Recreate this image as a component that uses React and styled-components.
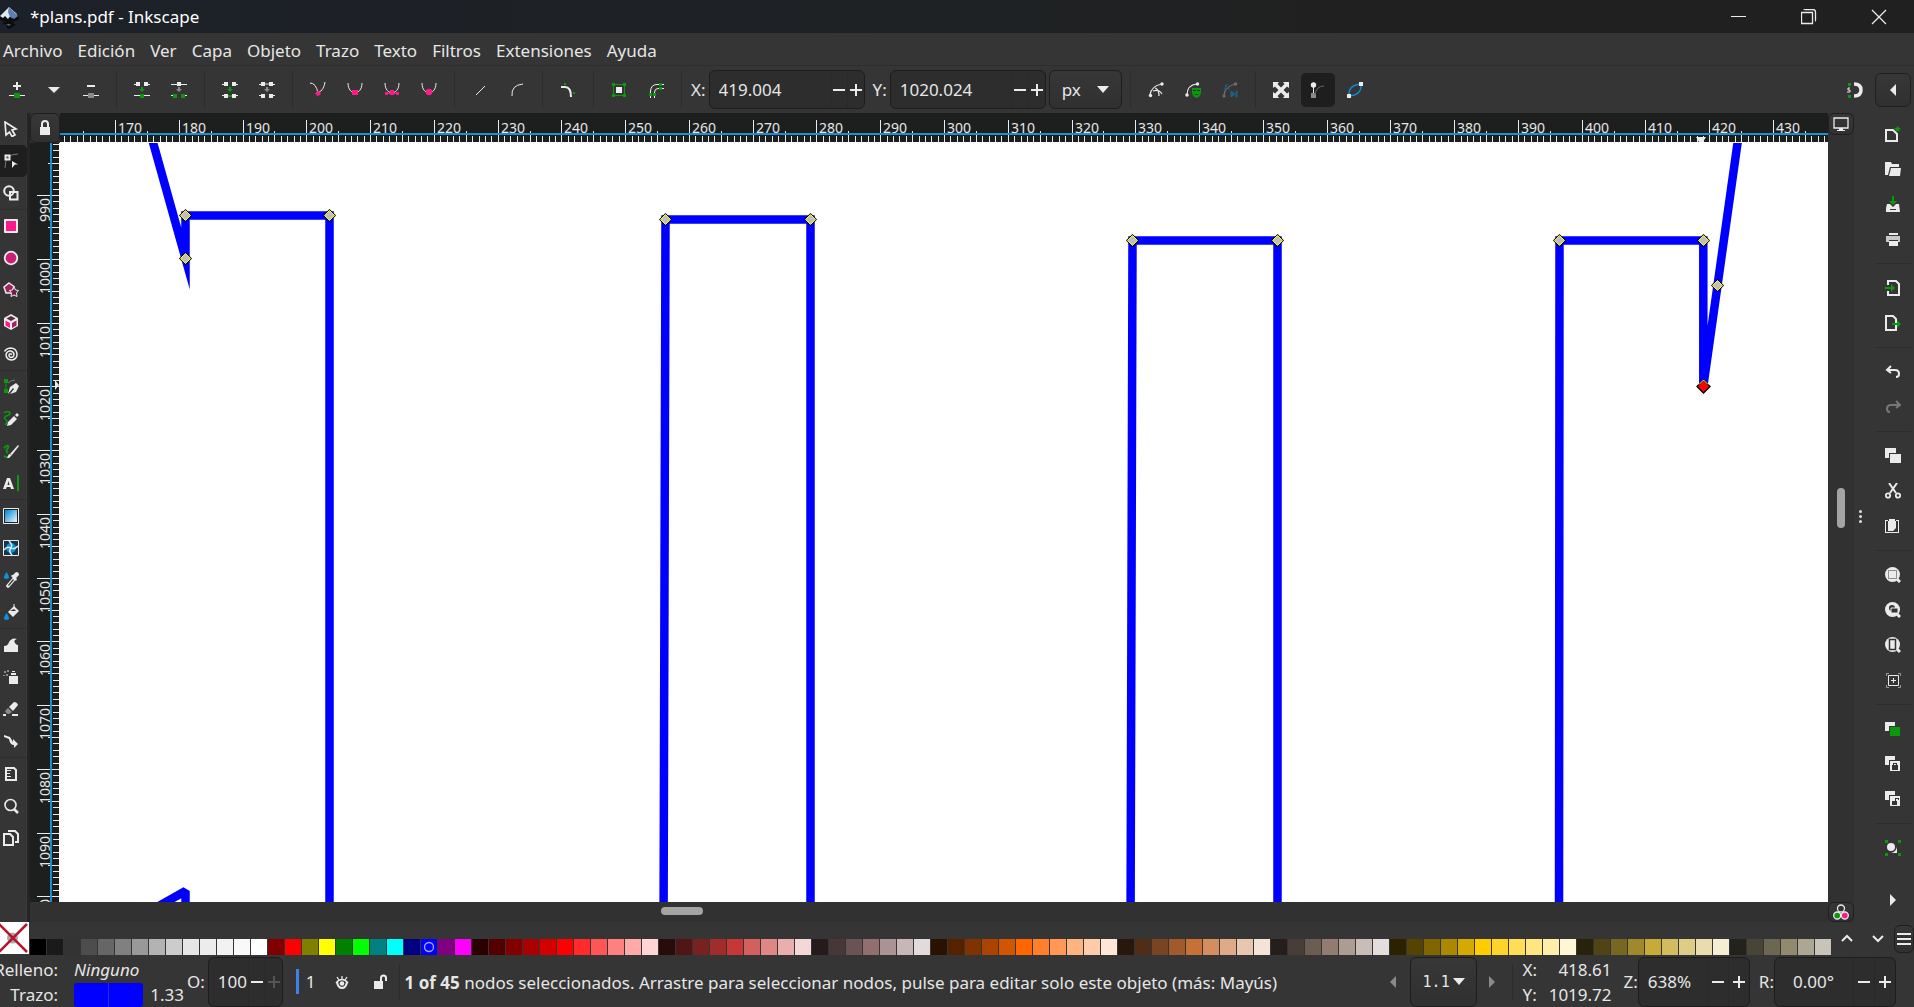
import React from 'react';
import styled, { createGlobalStyle } from 'styled-components';

const FG = '#ebebeb';
const DIM = '#8a8a8a';
const GREEN = '#0a980c';
const PINK = '#ff1a8c';
const BLUE = '#0a93e0';
const UNIT = 6.377;

const GlobalStyle = createGlobalStyle`
    * {
        box-sizing: border-box;
    }
    body {
        margin: 0;
        overflow: hidden;
        background: #353535;
        color: #e6e6e6;
        font-family: "Noto Sans", "Open Sans", sans-serif;
        font-size: 17px;
        line-height: 24px;
    }
    button, input, select {
        margin: 0;
        padding: 0;
        border: 0;
        background: none;
        color: inherit;
        font: inherit;
        outline: none;
    }
    svg {
        display: block;
        flex: none;
    }
`

const Window = styled.div`
    display: flex;
    flex-direction: column;
    height: 100vh;
    overflow: hidden;
`

const TitleBar = styled.header`
    display: flex;
    align-items: center;
    height: 33px;
    background: linear-gradient(90deg, #1c2028, #1e2225 45%, #202020 70%);
    color: #fff;
    font-size: 17px;
`

const Title = styled.h1`
    flex: 1;
    margin: 0 0 0 10px;
    font-size: inherit;
    font-weight: 400;
`

const WindowButton = styled.button`
    display: flex;
    align-items: center;
    justify-content: center;
    width: 70px;
    height: 33px;
`

const MenuBar = styled.nav`
    display: flex;
    align-items: center;
    gap: 15px;
    height: 32px;
    padding: 3px 0 0 3px;

    a {
        color: inherit;
        text-decoration: none;
    }
`

const Toolbar = styled.div`
    display: flex;
    align-items: center;
    gap: 3px;
    height: 48px;
    padding-right: 3px;
    border-top: 1px solid #2e2e2e;
`

const ToolButton = styled.button`
    display: flex;
    align-items: center;
    justify-content: center;
    width: ${props => props.$width || '34px'};
    height: 34px;
    border-radius: 5px;
    background: ${props => props.$active ? '#1e1e1e' : 'none'};
`

const RaisedButton = styled.button`
    display: flex;
    align-items: center;
    justify-content: center;
    width: ${props => props.$width || '100%'};
    height: ${props => props.$height || '100%'};
    border: 1px solid #1f1f1f;
    border-radius: 6px;
    background: linear-gradient(#373737, #303030);
`

const Divider = styled.div`
    width: 11px;
    height: 38px;
    background: linear-gradient(#2d2d2d, #2d2d2d) center / 1px 100% no-repeat;
`

const Spacer = styled.div`
    flex: 1;
`

const Field = styled.label`
    display: flex;
    align-items: center;
    gap: ${props => props.$gap || '3px'};
    margin-left: ${props => props.$space || '0'};
`

const Spin = styled.span`
    display: flex;
    align-items: center;
    width: ${props => props.$width};
    height: ${props => props.$height};
    border: 1px solid #1d1d1d;
    border-radius: 6px;
    background: #2d2d2d;

    input {
        flex: 1;
        min-width: 0;
        height: 100%;
        padding-left: ${props => props.$pad || '9px'};
    }
    button {
        display: flex;
        align-items: center;
        justify-content: center;
        width: ${props => props.$step || '17px'};
        height: 100%;
        border-left: 1px solid #292929;
    }
`

const SelectBox = styled.span`
    position: relative;
    width: ${props => props.$width};
    height: ${props => props.$height};
    border: 1px solid #1d1d1d;
    border-radius: 6px;
    background: linear-gradient(#373737, #303030);

    select {
        width: 100%;
        height: 100%;
        padding-left: 12px;
        appearance: none;
        ${props => props.$mono && 'font: 15px "DejaVu Sans Mono", monospace;'}
    }
    svg {
        position: absolute;
        top: 50%;
        right: ${props => props.$arrow};
        margin-top: -4px;
        pointer-events: none;
    }
`

const Main = styled.div`
    display: flex;
    flex: 1;
    min-height: 0;
`

const Toolbox = styled.aside`
    width: 30px;
    border-right: 3px solid #242424;
    box-shadow: inset -1px 0 #3b3b3b;
`

const Tool = styled.button`
    display: flex;
    align-items: center;
    justify-content: center;
    width: 27px;
    height: 32px;
    padding-right: 5px;
    border-radius: 0 5px 5px 0;
    background: ${props => props.$active ? '#1e1e1e' : 'none'};
`

const ToolLine = styled.div`
    height: 1px;
    background: #2e2e2e;
`

const Work = styled.main`
    display: grid;
    flex: 1;
    grid-template-columns: 30px minmax(0, 1fr) 26px;
    grid-template-rows: 30px minmax(0, 1fr) 20px;
    min-width: 0;
    background: #313131;
`

const Drawing = styled.svg`
    width: 100%;
    height: 100%;
    overflow: hidden;
    background: ${props => props.$paper ? '#fff' : '#1d1f1f'};

    text {
        fill: #e6e6e6;
        font-size: 14px;
    }
`

const Track = styled.div`
    display: flex;
    justify-content: center;
    padding: ${props => props.$pad};
`

const Thumb = styled.div`
    width: ${props => props.$width};
    height: ${props => props.$height};
    border-radius: 5px;
    background: #a4a4a2;
`

const BottomTrack = styled.div`
    display: flex;
    grid-column: 1 / 3;
    padding: 5px 0 0 631px;
`

const Handle = styled.div`
    display: flex;
    flex-direction: column;
    align-items: center;
    gap: 2px;
    width: 13px;
    padding-top: 397px;

    i {
        width: 3px;
        height: 3px;
        border-radius: 2px;
        background: #dedede;
    }
`

const CommandBar = styled.aside`
    display: flex;
    flex-direction: column;
    align-items: center;
    width: 47px;
    padding: 3px 3px 5px 8px;
`

const Command = styled.button`
    display: flex;
    align-items: center;
    justify-content: center;
    width: 36px;
    height: 35px;
`

const CommandLine = styled.div`
    width: 36px;
    height: 14px;
    background: linear-gradient(#2d2d2d, #2d2d2d) center / 100% 1px no-repeat;
`

const Palette = styled.div`
    display: flex;
    height: 34px;
`

const NoColor = styled.button`
    width: 29px;
    height: 32px;
    background: #fff;
`

const Swatches = styled.div`
    display: flex;
    flex: 1;
    gap: 1px;
    padding: 17px 0 1px 1px;
`

const Swatch = styled.button`
    display: flex;
    flex: 1;
    align-items: center;
    justify-content: center;
    height: 16px;
    background: ${props => props.$color};
`

const PaletteNav = styled.div`
    display: flex;
    align-items: center;
    gap: 15px;
    width: 83px;
    padding-left: 8px;

    button:last-child {
        margin-left: -7px;
    }
`

const StatusBar = styled.footer`
    display: flex;
    align-items: center;
    height: 51px;
    padding-right: 18px;
`

const StyleInfo = styled.div`
    display: grid;
    grid-template-columns: 58px 69px auto;
    grid-template-rows: 25px 25px;
    column-gap: 8px;
    align-items: center;
    width: 187px;
    padding-top: 2px;

    span {
        justify-self: end;
    }
    em {
        grid-column: 2 / 4;
        margin-left: 8px;
    }
`

const StrokeColor = styled.button`
    width: 69px;
    height: 24px;
    margin-left: 8px;
    border-radius: 3px;
    background: linear-gradient(90deg, #0000ff 34px, #2a2ae0 34px, #2a2ae0 35px, #0000ff 35px);
`

const Width = styled.span`
    padding-right: 3px;
`

const Layer = styled.button`
    height: 25px;
    margin-left: 13px;
    padding: 0 8px 0 7px;
    border-left: 3px solid #3d82e8;
`

const LayerState = styled.div`
    display: flex;
    gap: 10px;
    margin-left: 4px;
`

const Message = styled.p`
    flex: 1;
    margin: 0;
    padding-top: 2px;
    overflow: hidden;
    white-space: nowrap;
`

const Pointer = styled.dl`
    display: grid;
    grid-template-columns: auto 1fr;
    grid-template-rows: 25px 25px;
    align-items: center;
    width: 89px;
    margin: 0 12px 0 5px;
    padding-top: 2px;

    dd {
        margin: 0;
        text-align: right;
    }
`

const Icon = ({ size = 16, children }) => (
    <svg width={size} height={size} viewBox={`0 0 ${size} ${size}`} fill={FG} aria-hidden="true">
        {children}
    </svg>
)

const Down = ({ color = FG }) => (
    <svg width="12" height="8" viewBox="0 0 12 8" fill={color}><path d="M0 0h12L6 7z" /></svg>
)

const Minus = () => <Icon size={12}><path d="M0 5h12v2H0z" /></Icon>
const Plus = ({ dim }) => <Icon size={12}><path fill={dim ? '#555' : FG} d="M5 0h2v5h5v2H7v5H5V7H0V5h5z" /></Icon>

const Logo = () => (
    <svg width="20" height="26" viewBox="0 0 20 26">
        <path d="M9 3 -1 13q-1 3 4 4h12q5-1 4-4z" fill="#0b0d10" />
        <path d="M9 3 0 12l3 2 2-2 3 3 3-4 3 2 3-3z" fill="#dfe9f5" />
        <path d="M9 3 18 12l-4 3-4-2-2-5z" fill="#5b7fb5" />
        <path d="M3 18q6-2 12 0l-2 2h3l-2 2-5 3-3-2 1-2-4-1z" fill="#0b0d10" />
        <path d="M6 20h5l-2 2z" fill="#51606f" />
    </svg>
)

const arc = 'M1 0C1 13 15 13 15 0'

const toolbarIcons = [
    ['Insertar nodo', <><path d="M7 0h2v3h3v2H9v3H7V5H4V3h3z" /><path d="M0 13h16v1H0z" /><path fill={GREEN} d="M5 11h6v5H5z" /></>],
    ['Opciones de insertar', <path d="M2 5h12L8 11z" />],
    ['Borrar nodo', <><path d="M4 3h8v2H4zM0 13h16v1H0z" /><path fill={DIM} d="M5 11h6v5H5z" /></>],
    null,
    ['Unir nodos', <><path d="M0 2h2V0h4v4H2V3H0zM10 0h4v2h2v1h-2v1h-4zM0 13h16v1H0z" /><path fill={GREEN} d="M7 5h2v2h2L8 10 5 7h2zM6 12h4v4H6z" /></>],
    ['Romper nodos', <><path d="M0 2h6V0h4v2h6v1h-6v1H6V3H0zM0 13h2v1H0zM14 13h2v1h-2z" /><path fill={DIM} d="M7 5h2v2h2L8 10 5 7h2z" /><path fill={GREEN} d="M2 12h4v4H2zM10 12h4v4h-4z" /></>],
    null,
    ['Unir con segmento', <><path d="M0 2h2V0h4v4H2V3H0zM10 0h4v2h2v1h-2v1h-4zM0 13h2v-1h4v4H2v-2H0zM10 12h4v1h2v1h-2v2h-4z" /><path fill={GREEN} d="M7 5h2v2h2L8 10 5 7h2zM6 13h4v2H6z" /></>],
    ['Borrar segmento', <><path d="M0 2h2V0h4v4H2V3H0zM10 0h4v2h2v1h-2v1h-4zM0 13h2v-1h4v4H2v-2H0zM10 12h4v1h2v1h-2v2h-4z" /><path fill={DIM} d="M7 5h2v2h2L8 10 5 7h2zM6 1h4v2H6z" /></>],
    null,
    ['Nodos vértice', <><path d="M0 1Q6 1 8 11 14 8 15 0" fill="none" stroke={FG} /><path fill={PINK} d="M8 8.500 11 11.500 8 14.500 5 11.500z" /></>],
    ['Nodos suaves', <><path d={arc} transform="translate(0 1)" fill="none" stroke={FG} /><path fill={PINK} d="M5 8h6v5H5z" /></>],
    ['Nodos simétricos', <><path d={arc} transform="translate(0 1)" fill="none" stroke={FG} /><path fill={PINK} d="M6 8h4v5H6zM1 10h3v3H1zM12 10h3v3h-3zM3 11h10v1H3z" /></>],
    ['Nodos automáticos', <><path d={arc} transform="translate(0 1)" fill="none" stroke={FG} /><circle fill={PINK} cx="8" cy="10" r="3.200" /></>],
    null,
    ['Crear líneas', <path d="M4 13 13 4" fill="none" stroke={FG} />],
    ['Crear curvas', <path d="M3 14Q2 3 14 2" fill="none" stroke={FG} />],
    null,
    ['Añadir esquinas', <><path d="M1 5h4q6 0 6 10" fill="none" stroke={FG} strokeWidth="2" /><path fill={GREEN} d="M4 1h2v2H4zM13 10h2v2h-2z" /></>],
    null,
    ['Objeto a trayecto', <><path d="M2.500 2.500h11v11h-11z" fill="none" stroke={GREEN} /><path fill={GREEN} d="M1 1h3v3H1zM12 1h3v3h-3zM1 12h3v3H1zM12 12h3v3h-3z" /><path d="M5 5h6v6H5z" /></>],
    ['Borde a trayecto', <><path d="M2.500 16V9Q3 2.500 9 2.500h7M6.500 16v-6Q7 6.500 10 6.500h6" fill="none" stroke={FG} /><path fill={GREEN} d="M1 11h3v3H1zM5 11h3v3H5zM11 1h3v3h-3zM11 5h3v3h-3z" /></>],
    null,
]

const toolbarEnd = [
    null,
    ['Mostrar trayecto', <><path d="M2 13Q3 4 14 2M7 6q4 1 4 8M5 9q6-2 9 3" fill="none" stroke={FG} strokeWidth="1.200" /><circle cx="2.500" cy="13.500" r="1.700" /><circle cx="14" cy="2" r="1.700" /></>],
    ['Mostrar máscara', <><path d="M2 13Q2 3 12 2" fill="none" stroke={FG} strokeWidth="1.200" /><circle cx="2" cy="13" r="1.700" /><circle cx="12.500" cy="2" r="1.700" /><path fill={GREEN} d="M7 6h9v5q-1 4-4.500 5Q8 15 7 11z" /><path d="M8 8h3v1H8zM12 8h3v1h-3zM9 12h5l-2 1h-1z" fill="#163a17" /></>],
    ['Efectos siguientes', <><path d="M2 13Q3 4 14 2" fill="none" stroke="#707070" strokeWidth="1.200" /><circle cx="13.500" cy="2" r="1.700" fill="#707070" /><path d="M3 3l5 5M5 2l-3 6M9 9v6l4-3zM14 9h1v6h-1z" stroke="#1c618c" fill="#1c618c" /><circle cx="2" cy="14" r="1.500" fill="#707070" /></>],
    null,
    ['Mostrar tiradores', <path d="M0 0h6L4.500 2 8 5.500 11.500 2 10 0h6v6l-2-1.500L10.500 8l3.500 3.500 2-1.500v6h-6l1.500-2L8 10.500 4.500 14 6 16H0v-6l2 1.500L5.500 8 2 4.500 0 6z" />],
    ['Tiradores Bézier', <><path d="M3 3h1v8H3z" /><circle cx="3.500" cy="3" r="2.700" /><path d="M1 11h5v5H1z" fill={DIM} /><path d="M5 13Q6 4 14 4" fill="none" stroke="#666" /></>, true],
    ['Contorno de trayecto', <><path d="M2 14Q1 3 14 2 15 13 2 14" fill="none" stroke={BLUE} strokeWidth="1.300" /><path d="M0 12h4v4H0zM12 0h4v4h-4z" /></>],
]

const tools = [
    ['Seleccionar', <path d="M2 1 13 8 9 9l3 5-3 1.500L6.500 11 3 14z" fill="none" stroke={FG} strokeWidth="1.700" />],
    ['Nodos', <><path d="M2 15Q2 8 5 4 9 1 15 1" fill="none" stroke="#777" /><path d="M2.500 2.500h4v4h-4z" fill="none" stroke={FG} strokeWidth="2" /><path d="M9 8l6 3.500H12L9 15z" /></>, true],
    ['Constructor de formas', <><circle cx="6" cy="6" r="4.800" fill="none" stroke={FG} strokeWidth="2" /><path d="M7 7h7.500v7.500H7z" fill="none" stroke={FG} strokeWidth="2" /></>],
    null,
    ['Rectángulo', <><rect x="1" y="1" width="14" height="14" rx="1" fill={FG} /><path d="M3 3h10v10H3z" fill={PINK} /></>],
    ['Elipse', <circle cx="8" cy="8" r="6.300" fill="#cb1f78" stroke={FG} strokeWidth="1.800" />],
    ['Estrella', <><path d="M6 1l5 3.500-2 6.500H3L1 5z" fill="#a3215f" stroke={FG} strokeWidth="1.500" /><path d="M11 5l1.500 3 3 .5-2 2.500.5 3.500-3-1.500-3 1.500.5-3.500L6.500 8.500l3-.5z" fill="#6d2349" stroke={FG} /></>],
    ['Caja 3D', <><path d="M8 0l7 4v8l-7 4-7-4V4z" /><path fill="#5d2a45" d="M8 2l4.500 2.500L8 7 3.500 4.500z" /><path fill={PINK} d="M2.500 6.500 7 9v5l-4.500-2.500z" /><path fill="#a3215f" d="M13.500 6.500 9 9v5l4.500-2.500z" /></>],
    ['Espiral', <path d="M8.500 9Q8 7 6.500 8 5 10 7.500 11.500 11 11.500 11 8 10 4.500 6.500 5 3 6 3 9.500 4 14 9 14M9 14Q14.500 13 14 7.500 13 2 7.500 2 3 2.500 1.500 5.500" fill="none" stroke={FG} strokeWidth="1.500" />],
    null,
    ['Pluma', <><path d="M1 0h4v4H1zM1 10h4v4H1zM2.500 4h1v6h-1z" fill={GREEN} /><path d="M5 4Q8 1 12 1" stroke="#777" fill="none" /><path d="M5 15l2-7 6-4 3 3-3 6-6 2 4-5-1-1z" /></>],
    ['Lápiz', <><path d="M1 2q4-3 6 0-1 3-4 3-3 2 0 4 2 1 0 4l-1 1" fill="none" stroke={GREEN} strokeWidth="1.500" /><path d="M5 11l6-6 3 3-6 6-4 1zM12 4l2-2 2 2-2 2z" /></>],
    ['Caligrafía', <><path d="M1 5q5-5 4 0-3 3 0 5M1 13q4 3 6-1" fill="none" stroke={GREEN} strokeWidth="2" /><path d="M7 11l8-9 1 1-7 9z" /><path d="M6 11l3 1-3 3H4z" /></>],
    ['Texto', <><path d="M0 14 4 3h3l4 11H8l-.7-2H3.700L3 14zM4.500 10h2L5.500 6z" /><path d="M14 0h2v16h-2z" fill={GREEN} /></>],
    null,
    ['Degradado', <><defs><linearGradient id="fade" x2="1" y2="1"><stop offset=".1" stopColor="#0e8fdb" /><stop offset="1" stopColor="#f4f6f8" /></linearGradient></defs><path d="M.5.5h15v15H.5z" fill="#222" stroke={FG} /><path d="M2 2h12v12H2z" fill="url(#fade)" /></>],
    ['Malla', <><path d="M.5.5h15v15H.5z" fill="#17364d" stroke={FG} /><circle cx="8" cy="8" r="5" fill={BLUE} /><path d="M6 1q4 4 2 7-3 3 1 7M1 10q3-4 7-2 3 2 7-2" fill="none" stroke={FG} strokeWidth="1.500" /></>],
    ['Cuentagotas', <><path d="M3.500 0q5 7 0 7-5 0 0-7" fill={BLUE} /><path d="M5 14l6-7" stroke={FG} strokeWidth="3.500" strokeLinecap="round" /><path d="M5.500 13.500l5-6" stroke="#353535" strokeWidth="1.200" /><path d="M8 4l5 5 1-2-1-1 3-3q0-3-3-3l-3 3-1 0z" /></>],
    ['Cubo de pintura', <><path d="M3.500 9q5 7 0 7-5 0 0-7" fill={BLUE} /><path d="M5 8l6-6 5 5-6 6z" /><path d="M7 7h6l-2-2z" fill="#353535" /><path d="M11 5V0" stroke={FG} /></>],
    null,
    ['Retocar', <path d="M1 15V9q4 0 5-4 3-5 8-3-4 1-2 4 1 2 3 2v7z" />],
    ['Aerógrafo', <><path d="M6 7h9v8H6zM8 4h5v2H8zM9 2h3v1H9z" /><path d="M1 2h2v2H1zM4 1h2v2H4zM3 5h2v2H3zM0 6h2v1H0z" fill={DIM} /></>],
    ['Borrador', <><path d="M6 6l5-5q3 0 4 3l-5 6z" /><path d="M5 7l4 4-3 2q-3 0-4-3z" fill={DIM} /><path d="M0 13h3v2H0zM9 13h6v2H9z" /></>],
    ['Conector', <path d="M1 2l6 2 3 5V6l5 5-4 4v-3Q7 12 6 6L1 4z" />],
    null,
    ['Medida', <><path d="M3 2h8l2 2v10H3z" fill="none" stroke={FG} strokeWidth="2" /><path d="M4 4h4v1H4zM4 7h3v1H4zM4 10h4v1H4z" /></>],
    ['Zoom', <><circle cx="7.500" cy="7" r="5.500" fill="none" stroke={FG} strokeWidth="1.600" /><path d="M11 11l4 4" stroke={FG} strokeWidth="2.500" /></>],
    ['Páginas', <><path d="M1 4h6l3 3v8H1z" fill="none" stroke={FG} strokeWidth="2" /><path d="M6 2V1h6l3 3v8h-3" fill="none" stroke={FG} strokeWidth="2" /></>],
]

const lens = <><circle cx="7.500" cy="7.500" r="7.500" /><path d="M12 12l3 3" stroke={FG} strokeWidth="3" /></>

const commands = [
    ['Nuevo', <><path d="M1 4h7l4 4v7H1z" fill="none" stroke={FG} strokeWidth="2" /><path d="M13 0l1 2h2l-2 2 1 2-2-1-2 1V4l-2-2h2z" fill={GREEN} /></>],
    ['Abrir', <><path d="M0 1h6l1 2h7v3H5L3 14H0z" /><path d="M6 7h10l-1 8H4z" /></>],
    ['Guardar', <><path d="M7 0h2v5h3L8 9 4 5h3z" fill={GREEN} /><path d="M2 8h3l3 3 3-3h3l1 8H1V12z" /><path d="M5 13h6v1H5z" fill="#353535" /></>],
    ['Imprimir', <><path d="M4 2h9v2H4zM4 10h9v5H4z" /><path d="M1 5h14v6h-2V9H4v2H1z" fill="#c8c8c8" /></>],
    null,
    ['Importar', <><path d="M3 5V1h8l3 3v11H3v-4" fill="none" stroke={FG} strokeWidth="2" /><path d="M0 7h6V4l4 4-4 4V9H0z" fill={GREEN} /></>],
    ['Exportar', <><path d="M1 1h7l3 3v11H1z" fill="none" stroke={FG} strokeWidth="2" /><path d="M7 8h5V5l4 4-4 4v-3H7z" fill={GREEN} /></>],
    null,
    ['Deshacer', <path d="M2 6h8q4 0 4 4 0 3-3 3M6 2 2 6l4 3" fill="none" stroke={FG} strokeWidth="2" />],
    ['Rehacer', <path d="M14 6H6q-4 0-4 4 0 3 3 3M11 2l4 4-4 3" fill="none" stroke="#777" strokeWidth="2" />],
    null,
    ['Duplicar', <path d="M0 0h11v5H4v5H0zM5 6h11v9H5z" />],
    ['Cortar', <><path d="M4 0l7 10M12 0 5 10" stroke={FG} strokeWidth="2" /><circle cx="3" cy="12.500" r="2.200" fill="none" stroke={FG} strokeWidth="1.800" /><circle cx="13" cy="12.500" r="2.200" fill="none" stroke={FG} strokeWidth="1.800" /></>],
    ['Pegar', <><path d="M0 2h3v1H1v11h12V3h-2V2h3v13H0z" /><path d="M4 1h6v2h1v7l-3 3H3V3h1z" /></>],
    null,
    ['Zoom a selección', <>{lens}<path d="M3.500 3.500h8v8h-8z" fill="none" stroke="#333" strokeDasharray="1 1" /></>],
    ['Zoom a dibujo', <>{lens}<circle cx="7" cy="6" r="3" fill="#333" /><path d="M6 6h7v5H6z" fill="#333" stroke={FG} /></>],
    ['Zoom a página', <>{lens}<path d="M4.500 2.500h6v10h-6z" fill="none" stroke="#333" strokeWidth="1.500" /></>],
    ['Centrar página', <><path d="M3.500 3.500h10v10h-10z" fill="none" stroke={FG} /><path d="M8 6h1v2h2v1H9v2H8V9H6V8h2z" /><path d="M1.500 4V1.500H4M13 1.500h2.500V4M1.500 13v2.500H4M13 15.500h2.500V13" fill="none" stroke="#999" /></>],
    null,
    ['Crear clon', <><path d="M0 1h10v4H4v5H0z" /><path d="M5 6h10v9H5z" fill={GREEN} /></>],
    ['Agrupar', <><path d="M0 0h10v4H4v5H0zM5 5h10v10H5z" /><path d="M7 9h6v5H7zM8 9V7h4v2h-1V8H9v1z" fill="#333" /></>],
    ['Desagrupar', <><path d="M0 0h10v4H4v5H0zM5 5h10v10H5z" /><path d="M7 10h5v4H7zM10 10V7h4v2h-1V8h-2v2z" fill="#333" /></>],
    null,
    ['Relleno y borde', <><path d="M0 0h3v3H0zM13 0h3v3h-3zM0 13h3v3H0zM13 13h3v3h-3z" fill={GREEN} /><circle cx="6" cy="7" r="4" /><path d="M12 7v6H6q5-1 6-6z" /></>],
]

const colors = `000000 1a1a1a 333333 4d4d4d 666666 808080 999999 b3b3b3 cccccc e6e6e6 ececec f2f2f2 f9f9f9 ffffff
    800000 ff0000 808000 ffff00 008000 00ff00 008080 00ffff 000080 0000ff 800080 ff00ff
    2b0000 550000 800000 aa0000 d40000 ff0000 ff2a2a ff5555 ff8080 ffaaaa ffd5d5
    280b0b 501616 782121 a02c2c c83737 d35f5f de8787 e9afaf f4d7d7
    241c1c 483737 6c5353 916f6f ac9393 c8b7b7 e3dbdb
    2b1100 552200 803300 aa4400 d45500 ff6600 ff7f2a ff9955 ffb380 ffccaa ffe6d5
    28170b 502d16 784421 a05a2c c87137 d38d5f deaa87 e9c6af f4e3d7
    241f1c 483e37 6c5d53 917c6f ac9d93 c8beb7 e3dedb
    2b2200 554400 806600 aa8800 d4aa00 ffcc00 ffd42a ffdd55 ffe680 ffeeaa fff6d5
    28220b 504416 786721 a0892c c8ab37 d3bc5f decd87 e9ddaf f4eed7
    24221c 484537 6c6753 918a6f aca793 c8c4b7`.split(/\s+/)

const nodes = [
    [125, 72], [125, 115], [269, 72],
    [605, 76], [750, 76],
    [1072, 97], [1217, 97],
    [1499, 97], [1643, 97], [1657, 142],
]

const ticks = (first, offset, count) =>
    Array.from({ length: count }, (_, i) => {
        const value = first + i
        return { value, at: Math.round(offset + i * UNIT) }
    })

const tickStart = value => value % 10 === 0 ? 7 : value % 5 === 0 ? 18 : 23

const TopRuler = () => (
    <Drawing aria-label="Regla horizontal">
        {ticks(162, 4, 277).map(({ value, at }) => (
            <g key={value}>
                <rect x={at} y={tickStart(value)} width="1" height={29 - tickStart(value)} fill={FG} />
                {value % 10 === 0 && <text x={at + 3} y="20">{value}</text>}
            </g>
        ))}
        <rect y="20" width="100%" height="2" fill="#1b8fd0" />
        <path d="M1636 24h10l-3 5h-4z" fill={FG} />
        <rect y="29" width="100%" height="1" fill="#fff" />
    </Drawing>
)

const SideRuler = () => (
    <Drawing aria-label="Regla vertical">
        {ticks(982, 1, 119).map(({ value, at }) => (
            <g key={value}>
                <rect x={tickStart(value)} y={at} width={29 - tickStart(value)} height="1" fill={FG} />
                {value % 10 === 0 && (
                    <text transform={`translate(20 ${at + 3}) rotate(-90)`} textAnchor="end">{value}</text>
                )}
            </g>
        ))}
        <rect x="20" width="2" height="100%" fill="#1b8fd0" />
        <path d="M25 237v10l4-5z" fill={FG} />
        <rect x="29" width="1" height="100%" fill="#fff" />
    </Drawing>
)

const Canvas = () => (
    <Drawing $paper aria-label="Lienzo">
        <g fill="none" stroke="#0000ff" strokeWidth="8.500" strokeMiterlimit="10">
            <path d="M89-15 125.500 115.500V72.500H269.500V800" />
            <path d="M603.500 800 605.500 76.500H750.500V800" />
            <path d="M1070.500 800 1072.500 97.500H1217.500V800" />
            <path d="M1499 800 1499.500 97.500H1643.300V243.500L1679.500-14" />
            <path d="M90 768 125.500 748V800" strokeLinejoin="bevel" />
        </g>
        {nodes.map(([x, y]) => (
            <g key={`${x}-${y}`} transform={`translate(${x + 0.5} ${y + 0.5})`}>
                <path d="M0-6.500 6.500 0 0 6.500-6.500 0z" fill="#000" />
                <path d="M0-5 5 0 0 5-5 0z" fill="#bfbfbf" stroke="#ffff00" />
            </g>
        ))}
        <path d="M1643.500 237 1650 243.500 1643.500 250 1637 243.500z" fill="#ff0000" stroke="#000" strokeWidth="1.300" />
        <path d="M1639 241.500 1643.500 237 1648 241.500" fill="none" stroke="#ffff00" />
    </Drawing>
)

const Buttons = ({ items, as: Item, line: Line }) => items.map((item, i) => (
    item
        ? <Item key={item[0]} aria-label={item[0]} $active={item[2]}><Icon>{item[1]}</Icon></Item>
        : <Line key={i} />
))

const NumberField = ({ label, value, dimPlus, space, gap, ...box }) => (
    <Field $space={space} $gap={gap}>
        {label}
        <Spin {...box}>
            <input defaultValue={value} />
            <button aria-label="Reducir"><Minus /></button>
            <button aria-label="Aumentar"><Plus dim={dimPlus} /></button>
        </Spin>
    </Field>
)

const App = () => {
    return (
        <Window>
            <GlobalStyle />
            <TitleBar>
                <Logo />
                <Title>*plans.pdf - Inkscape</Title>
                <WindowButton aria-label="Minimizar"><Icon><path d="M0 7h15v1H0z" /></Icon></WindowButton>
                <WindowButton aria-label="Restaurar">
                    <Icon><path d="M.5 3.500h11v11H.5zM3 1q0-.5 1-.5h8q2.500 0 2.500 2.500v8q0 1-.5 1" fill="none" stroke={FG} strokeWidth="1.300" /></Icon>
                </WindowButton>
                <WindowButton aria-label="Cerrar"><Icon><path d="M1 1l14 14M15 1 1 15" stroke={FG} strokeWidth="1.300" /></Icon></WindowButton>
            </TitleBar>
            <MenuBar>
                {['Archivo', 'Edición', 'Ver', 'Capa', 'Objeto', 'Trazo', 'Texto', 'Filtros', 'Extensiones', 'Ayuda'].map(name => (
                    <a key={name} href="#menu">{name}</a>
                ))}
            </MenuBar>
            <Toolbar>
                <Buttons items={toolbarIcons} as={ToolButton} line={Divider} />
                <NumberField label="X:" value="419.004" space="1px" $width="156px" $height="39px" />
                <NumberField label="Y:" value="1020.024" space="5px" $width="156px" $height="39px" />
                <SelectBox $width="73px" $height="39px" $arrow="12px">
                    <select aria-label="Unidad" defaultValue="px"><option>px</option><option>mm</option></select>
                    <Down />
                </SelectBox>
                <Buttons items={toolbarEnd} as={ToolButton} line={Divider} />
                <Spacer />
                <ToolButton aria-label="Ajuste">
                    <Icon>
                        <path d="M7 2q7 0 7 6t-7 6" fill="none" stroke={FG} strokeWidth="3.500" />
                        <path d="M1 1h3v3H1zM1 13h3v3H1z" fill={GREEN} />
                        <path d="M3 6H1v2h2v2H0" fill="none" stroke={FG} />
                    </Icon>
                </ToolButton>
                <RaisedButton $width="36px" $height="34px" aria-label="Opciones de ajuste">
                    <Icon><path d="M11 2v12L5 8z" /></Icon>
                </RaisedButton>
            </Toolbar>
            <Main>
                <Toolbox>
                    <Buttons items={tools} as={Tool} line={ToolLine} />
                </Toolbox>
                <Work>
                    <RaisedButton aria-label="Bloquear guías">
                        <Icon><path d="M3 7h10v8H3z" /><path d="M5 8V4q0-3 3-3t3 3v4" fill="none" stroke={FG} strokeWidth="2" /></Icon>
                    </RaisedButton>
                    <TopRuler />
                    <RaisedButton $height="22px" aria-label="Pantalla">
                        <Icon><path d="M1 2h14v10H1z" fill="none" stroke={FG} strokeWidth="1.300" /><path d="M6 12h4v2h2v1H4v-1h2z" /></Icon>
                    </RaisedButton>
                    <SideRuler />
                    <Canvas />
                    <Track $pad="345px 0 0"><Thumb $width="8px" $height="40px" /></Track>
                    <BottomTrack><Thumb $width="42px" $height="8px" /></BottomTrack>
                    <RaisedButton aria-label="Gestión de color">
                        <Icon>
                            <circle cx="8" cy="4.500" r="3.500" fill="none" stroke={FG} strokeWidth="1.300" />
                            <circle cx="4.200" cy="11.500" r="3.500" fill={GREEN} stroke={FG} strokeWidth="1.300" />
                            <circle cx="11.800" cy="11.500" r="3.500" fill={PINK} stroke={FG} strokeWidth="1.300" />
                        </Icon>
                    </RaisedButton>
                </Work>
                <Handle><i /><i /><i /></Handle>
                <CommandBar>
                    <Buttons items={commands} as={Command} line={CommandLine} />
                    <Spacer />
                    <Command aria-label="Más órdenes"><Icon><path d="M5 2v12l6-6z" /></Icon></Command>
                </CommandBar>
            </Main>
            <Palette>
                <NoColor aria-label="Ninguno">
                    <svg width="29" height="32" viewBox="0 0 29 32">
                        <circle cx="12.500" cy="16" r="5.500" fill="#aaa" />
                        <path d="M-1 2 27 30M27 2-1 30" stroke="#b5162c" strokeWidth="2.500" />
                    </svg>
                </NoColor>
                <Swatches>
                    {colors.map((color, i) => (
                        <Swatch key={i} $color={`#${color}`} aria-label={`#${color}`}>
                            {color === '0000ff' && <Icon size={12}><circle cx="6" cy="6" r="4.500" fill="none" stroke="#a8a8ff" strokeWidth="1.300" /></Icon>}
                        </Swatch>
                    ))}
                </Swatches>
                <PaletteNav>
                    <button aria-label="Subir"><Icon><path d="M3 10l5-5 5 5" fill="none" stroke={FG} strokeWidth="2" /></Icon></button>
                    <button aria-label="Bajar"><Icon><path d="M3 5l5 5 5-5" fill="none" stroke={FG} strokeWidth="2" /></Icon></button>
                    <RaisedButton $width="20px" $height="28px" aria-label="Menú de paleta">
                        <Icon size={14}><path d="M0 1h14v2H0zM0 6h14v2H0zM0 11h14v2H0z" /></Icon>
                    </RaisedButton>
                </PaletteNav>
            </Palette>
            <StatusBar>
                <StyleInfo>
                    <span>Relleno:</span>
                    <em>Ninguno</em>
                    <span>Trazo:</span>
                    <StrokeColor aria-label="Color de trazo" />
                    <Width>1.33</Width>
                </StyleInfo>
                <NumberField label="O:" value="100" dimPlus $width="75px" $height="50px" $pad="9px" />
                <Layer>1</Layer>
                <LayerState>
                    <ToolButton $width="28px" aria-label="Visible">
                        <Icon>
                            <path d="M3 8q1 6 5 6t5-6" fill="none" stroke={FG} strokeWidth="2" />
                            <path d="M2 9q6-7 12 0" fill="none" stroke={FG} strokeWidth="1.500" />
                            <circle cx="8" cy="9.500" r="2.300" />
                            <path d="M3 3l2 3M8 2v3M13 3l-2 3" stroke={FG} strokeWidth="1.300" />
                        </Icon>
                    </ToolButton>
                    <ToolButton $width="28px" aria-label="Desbloqueado">
                        <Icon><path d="M2 7h9v8H2z" /><path d="M9 8V4q0-2.500 2.500-2.500T14 4v3" fill="none" stroke={FG} strokeWidth="2" /></Icon>
                    </ToolButton>
                </LayerState>
                <Divider />
                <Message>
                    <b>1 of 45</b> nodos seleccionados. Arrastre para seleccionar nodos, pulse para editar solo este objeto (más: Mayús)
                </Message>
                <ToolButton aria-label="Página anterior"><Icon><path d="M11 2v12L5 8z" fill={DIM} /></Icon></ToolButton>
                <SelectBox $width="67px" $height="50px" $arrow="11px" $mono>
                    <select aria-label="Página" defaultValue="1.1"><option>1.1</option></select>
                    <Down />
                </SelectBox>
                <ToolButton $width="30px" aria-label="Página siguiente"><Icon><path d="M5 2v12l6-6z" fill={DIM} /></Icon></ToolButton>
                <Divider />
                <Pointer>
                    <dt>X:</dt><dd>418.61</dd>
                    <dt>Y:</dt><dd>1019.72</dd>
                </Pointer>
                <NumberField label="Z:" value="638%" gap="0" $width="112px" $height="50px" $step="21px" />
                <NumberField label="R:" value="0.00°" gap="0" space="9px" $width="122px" $height="50px" $pad="18px" $step="21px" />
            </StatusBar>
        </Window>
    )
}

export default App;
